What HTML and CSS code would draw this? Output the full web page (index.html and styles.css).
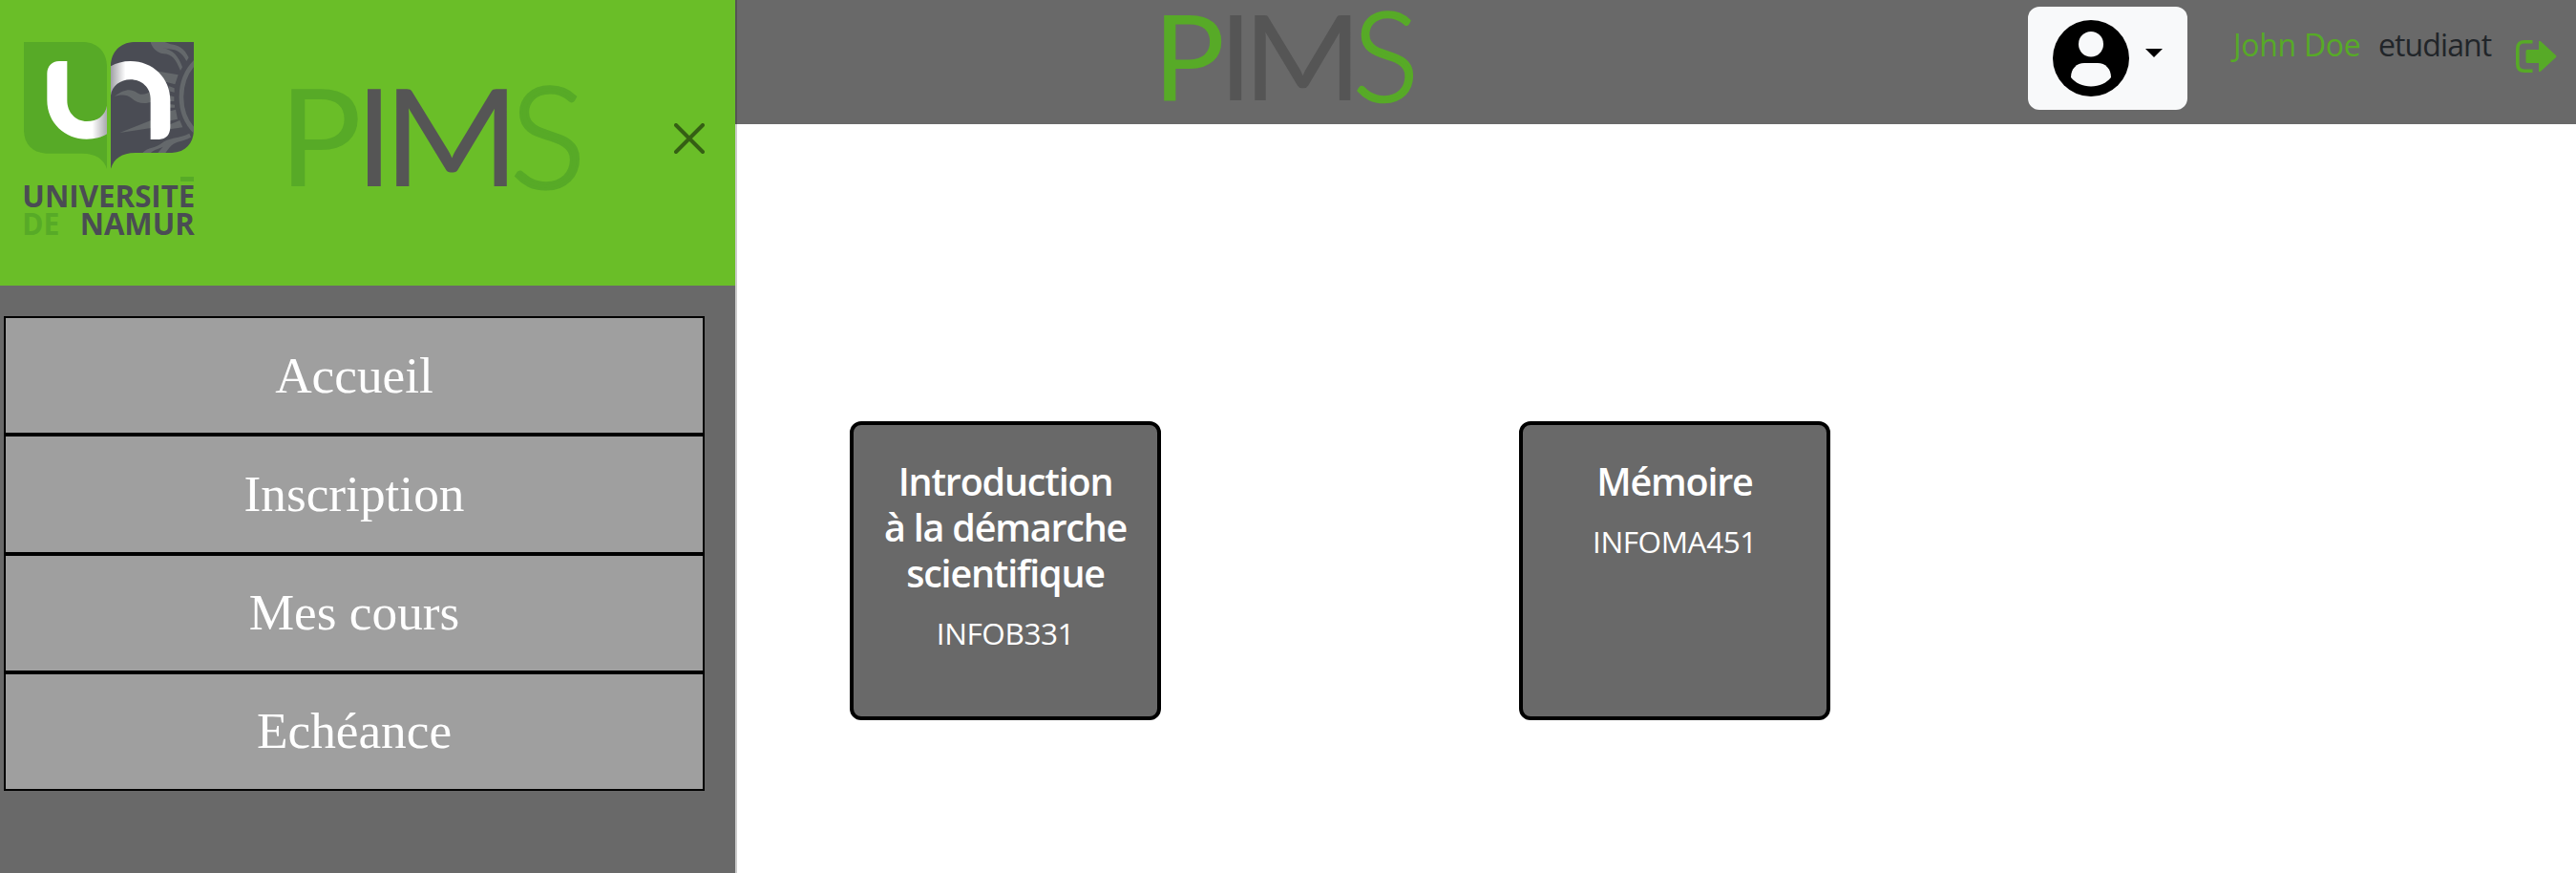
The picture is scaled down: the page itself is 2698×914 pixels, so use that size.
FILE: index.html
```html
<!DOCTYPE html>
<html lang="fr">
<head>
<meta charset="utf-8">
<title>PIMS</title>
<link rel="stylesheet" href="styles.css">
</head>
<body>
<div class="app">
  <aside class="sidebar">
    <div class="sidebar-head">
      <svg class="unamur" viewBox="72 66 540 620">
        <defs>
          <linearGradient id="gu" gradientUnits="userSpaceOnUse" x1="290" x2="336" y1="0" y2="0"><stop offset="0" stop-color="#fff"/><stop offset="1" stop-color="#a9a9ad"/></linearGradient>
          <linearGradient id="gn" gradientUnits="userSpaceOnUse" x1="348" x2="394" y1="0" y2="0"><stop offset="0" stop-color="#a0a0a5"/><stop offset="1" stop-color="#fff"/></linearGradient>
          <clipPath id="page"><path d="M609 72H420C376 74 350 104 348 145V470C358 438 382 421 425 420H540C584 417 607 390 609 350Z"/></clipPath>
        </defs>
        <path fill="#57aa27" d="M75 72H264C308 74 334 104 336 145V470C326 440 302 423 259 422H144C100 419 77 392 75 352Z"/>
        <g clip-path="url(#page)">
          <path fill="#4a4c54" d="M340 66H612V475H340Z"/>
          <g fill="#64686b">
            <path d="M473 72C478 90 492 106 514 109C540 110 552 125 567 162L573 151C561 117 544 96 510 91L530 94C558 96 573 107 586 132L593 121C579 92 561 82 536 79L518 72Z"/>
            <path d="M360 242C390 220 410 217 430 231C446 242 459 235 480 224V258C455 270 430 264 413 248C398 236 383 237 360 242Z"/>
            <path d="M376 357L480 316V341ZM462 158L560 175L550 205L500 192ZM530 210L548 217V230L530 226ZM530 239L547 244V258H530ZM530 267L549 269V278H530ZM530 290L552 284L558 314L530 320ZM530 332L565 318L574 340L534 346Z"/>
            <path d="M448 420C466 402 488 406 507 391C528 371 558 377 595 359L600 371C570 388 548 382 532 404L520 420H496L512 401C493 409 482 411 474 420Z"/>
          </g>
          <path fill="none" stroke="#64686b" stroke-width="14" d="M616 132C556 190 553 296 616 356"/>
        </g>
        <path fill="url(#gu)" d="M211 132H186C162 133 149 148 148 170V255C148 326 204 377 272 377C298 377 320 371 336 361V272C330 304 306 321 273 321C238 321 211 294 211 255Z"/>
        <path fill="url(#gn)" d="M348 148C366 138 386 132 410 132C480 132 535 185 535 255V340C534 364 522 377 500 378H473V250C473 215 445 190 410 190C378 190 352 210 348 240Z"/>
        <path fill="#57aa27" d="M567 495H609V510H567Z"/>
        <g class="uni">
          <text x="70" y="591" textLength="543" lengthAdjust="spacingAndGlyphs">UNIVERSITE</text>
          <text class="uni-green" x="70" y="678" textLength="117" lengthAdjust="spacingAndGlyphs">DE</text>
          <text x="251" y="678" textLength="360" lengthAdjust="spacingAndGlyphs">NAMUR</text>
        </g>
      </svg>
      <svg class="pims-side" viewBox="0 0 304 112" preserveAspectRatio="none"><text class="wordmark" y="107"><tspan x="-13" textLength="87" lengthAdjust="spacingAndGlyphs">P</tspan><tspan class="wm-grey" x="67">I</tspan><tspan class="wm-grey" x="96" textLength="144" lengthAdjust="spacingAndGlyphs">M</tspan><tspan class="wm-s" x="229" y="109">S</tspan></text></svg>
      <svg class="close" viewBox="0 0 32 32"><path d="M2 2L30 30M30 2L2 30"/></svg>
    </div>
    <nav class="menu">
      <a class="menu-item">Accueil</a>
      <a class="menu-item">Inscription</a>
      <a class="menu-item">Mes cours</a>
      <a class="menu-item">Echéance</a>
    </nav>
  </aside>
  <main class="main">
    <header class="topbar">
      <svg class="pims-top" viewBox="0 0 304 112" preserveAspectRatio="none"><text class="wordmark" y="107"><tspan x="-13" textLength="87" lengthAdjust="spacingAndGlyphs">P</tspan><tspan class="wm-grey" x="67">I</tspan><tspan class="wm-grey" x="96" textLength="144" lengthAdjust="spacingAndGlyphs">M</tspan><tspan class="wm-s" x="229" y="109">S</tspan></text></svg>
      <div class="account">
        <button class="avatar">
          <svg class="avatar-icon" viewBox="0 0 80 80"><circle cx="40" cy="40" r="40"/><rect class="hole" x="27" y="12" width="26" height="26.500" rx="13"/><path class="hole" d="M33 45H47C55 45 61 51 61 60C56 66 49 69.500 40 69.500C31 69.500 24 66 19 60C19 51 25 45 33 45Z"/></svg>
          <span class="caret"></span>
        </button>
        <span class="user">John Doe</span>
        <span class="role">etudiant</span>
        <svg class="logout" viewBox="0 0 43 34"><path class="frame" d="M17.500 1.800H9Q1.800 1.800 1.800 9V25Q1.800 32.200 9 32.200H17.500"/><path d="M12 10H24V2Q24 0 26 1.200L42 16Q43 17 42 18L26 32.800Q24 34 24 32V24H12Q10.500 24 10.500 22.500V11.500Q10.500 10 12 10Z"/></svg>
      </div>
    </header>
    <section class="courses">
      <article class="card">
        <h2 class="card-title">Introduction<br>à la démarche<br>scientifique</h2>
        <p class="card-code">INFOB331</p>
      </article>
      <article class="card">
        <h2 class="card-title">Mémoire</h2>
        <p class="card-code">INFOMA451</p>
      </article>
    </section>
  </main>
</div>
</body>
</html>
```
FILE: styles.css
```css
* { box-sizing: border-box; }
body { margin: 0; background: #fff; font-family: "Open Sans", "Noto Sans", sans-serif; }
.app { display: flex; height: 914px; overflow: hidden; }

.sidebar {
  position: relative;
  z-index: 1;
  flex: none;
  width: 772px;
  margin-right: -2px;
  background: #696969;
  background-clip: padding-box;
  border-right: 2px solid rgba(0, 0, 0, .2);
}
.sidebar-head {
  display: flex;
  align-items: flex-start;
  height: 299px;
  padding: 42px 32px 0 24px;
  background: #6abe28;
}
.unamur { width: 180px; height: 206.67px; overflow: visible; }
.uni { font: 700 99px "Open Sans", sans-serif; fill: #4a4c54; }
.uni-green { fill: #57aa27; }
.wordmark { font: 400 142px Lato, sans-serif; fill: #57aa27; }
.wm-grey { fill: #555; }
.wm-s { font-size: 149px; font-weight: 300; stroke: #57aa27; stroke-width: 3; }
.pims-side { width: 304px; height: 112px; margin: 46px 0 0 101px; overflow: visible; }
.close { width: 32px; height: 32px; margin: 87px 0 0 auto; }
.close path { fill: none; stroke: #355f14; stroke-width: 4; stroke-linecap: round; }

.menu { display: flex; flex-direction: column; width: 734px; height: 497px; margin: 32px 0 0 4px; }
.menu-item {
  flex: 1;
  display: flex;
  align-items: center;
  justify-content: center;
  border: 2px solid #000;
  background: #9f9f9f;
  color: #fff;
  font: 53.3px "Liberation Serif", serif;
}

.main { flex: 1; }
.topbar {
  display: flex;
  justify-content: space-between;
  align-items: flex-start;
  height: 130px;
  padding: 0 20px 0 449px;
  background: #696969;
}
.pims-top { width: 263px; height: 98px; margin-top: 11px; overflow: visible; }
.account { display: flex; align-items: flex-start; padding-top: 7px; }
.avatar {
  display: flex;
  align-items: flex-start;
  width: 167px;
  height: 108px;
  padding: 14px 26px 0;
  border: 0;
  border-radius: 12px;
  background: #f8f9fa;
}
.avatar-icon { width: 80px; height: 80px; }
.hole { fill: #f8f9fa; }
.caret { margin: 30px 0 0 17px; border: 9px solid transparent; border-top-color: #000; border-bottom: 0; }
.user, .role { font-size: 32px; line-height: 48px; margin-top: 16px; white-space: nowrap; }
.user { width: 135px; margin-left: 48px; color: #57aa27; letter-spacing: -.3px; }
.role { width: 122px; margin-left: 17px; color: #212529; letter-spacing: -.9px; }
.logout { width: 43px; height: 34px; margin: 35px 0 0 22px; fill: #57aa27; }
.frame { fill: none; stroke: #57aa27; stroke-width: 3.6; }

.courses { display: flex; gap: 375px; padding: 311px 0 0 120px; }
.card {
  width: 326px;
  height: 313px;
  padding-top: 35px;
  border: 4px solid #000;
  border-radius: 12px;
  background: #696969;
  color: #fff;
  text-align: center;
}
.card-title { margin: 0 0 15px; font-size: 39.5px; font-weight: 600; line-height: 48px; letter-spacing: -1.2px; }
.card-code { margin: 0; font-size: 31.5px; line-height: 48px; letter-spacing: -.4px; }
```
